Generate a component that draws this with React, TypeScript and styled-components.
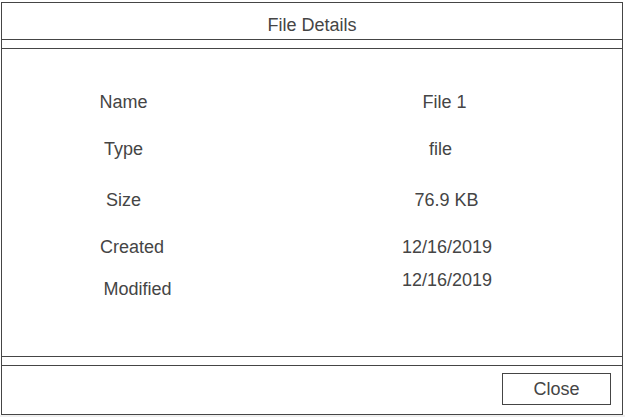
import React from "react";
import styled, { createGlobalStyle } from "styled-components";

const GlobalStyle = createGlobalStyle`
  html, body {
    margin: 0;
    padding: 0;
    background: #efefef;
  }
  body {
    font-family: "Liberation Sans", Arial, sans-serif;
    color: #454545;
  }
`;

const Page = styled.div`
  background: #ffffff;
  padding: 2px 0 0 1px;
`;

const Frame = styled.div`
  box-sizing: border-box;
  width: 622px;
  height: 413px;
  border: 1px solid #454545;
  display: flex;
  flex-direction: column;
`;

const TitleBar = styled.div`
  height: 37px;
  box-sizing: border-box;
  padding-top: 11px;
  text-align: center;
  font-size: 18px;
  line-height: 22px;
  border-bottom: 1px solid #454545;
`;

const Strip = styled.div`
  height: 9px;
  box-sizing: border-box;
  border-bottom: 1px solid #454545;
`;

const Body = styled.div`
  height: 308px;
  box-sizing: border-box;
  padding-top: 41px;
  border-bottom: 1px solid #454545;
  display: flex;
  flex-direction: column;
`;

const Row = styled.div<{ $mt: number; $h: number }>`
  display: grid;
  grid-template-columns: 243px 1fr;
  margin-top: ${(p) => p.$mt}px;
  height: ${(p) => p.$h}px;
  align-items: center;
  font-size: 18px;
  line-height: 24px;
`;

const Label = styled.div<{ $shift?: number; $align?: string }>`
  text-align: center;
  align-self: ${(p) => p.$align ?? "center"};
  padding-left: ${(p) => Math.max(0, (p.$shift ?? 0) * 2)}px;
  padding-right: ${(p) => Math.max(0, -(p.$shift ?? 0) * 2)}px;
`;

const Value = styled.div<{ $shift?: number; $align?: string }>`
  text-align: center;
  align-self: ${(p) => p.$align ?? "center"};
  margin-left: 25px;
  padding-left: ${(p) => Math.max(0, (p.$shift ?? 0) * 2)}px;
  padding-right: ${(p) => Math.max(0, -(p.$shift ?? 0) * 2)}px;
`;

const Footer = styled.div`
  flex: 1;
  display: flex;
  justify-content: flex-end;
  align-items: flex-start;
  padding: 7px 11px 0 0;
`;

const CloseButton = styled.button`
  box-sizing: border-box;
  width: 109px;
  height: 32px;
  border: 1px solid #454545;
  background: #ffffff;
  border-radius: 0;
  font-family: "Liberation Sans", Arial, sans-serif;
  font-size: 18px;
  color: #454545;
  padding: 0;
  cursor: pointer;
`;

type Item = {
  label: string;
  value: string;
  mt: number;
  h: number;
  ls?: number;
  vs?: number;
  la?: string;
  va?: string;
};

const items: Item[] = [
  { label: "Name", value: "File 1", mt: 0, h: 24, ls: 0, vs: -1.5 },
  { label: "Type", value: "file", mt: 23, h: 24, ls: 0, vs: -5.5 },
  { label: "Size", value: "76.9 KB", mt: 27, h: 24, ls: 0, vs: 0.5 },
  { label: "Created", value: "12/16/2019", mt: 23, h: 24, ls: 8.5, vs: 1 },
  {
    label: "Modified",
    value: "12/16/2019",
    mt: 9,
    h: 33,
    ls: 14,
    vs: 1,
    la: "end",
    va: "start",
  },
];

export default function App() {
  return (
    <>
      <GlobalStyle />
      <Page>
        <Frame>
          <TitleBar>File Details</TitleBar>
          <Strip />
          <Body>
            {items.map((it) => (
              <Row key={it.label} $mt={it.mt} $h={it.h}>
                <Label $shift={it.ls} $align={it.la}>
                  {it.label}
                </Label>
                <Value $shift={it.vs} $align={it.va}>
                  {it.value}
                </Value>
              </Row>
            ))}
          </Body>
          <Strip />
          <Footer>
            <CloseButton>Close</CloseButton>
          </Footer>
        </Frame>
      </Page>
    </>
  );
}
